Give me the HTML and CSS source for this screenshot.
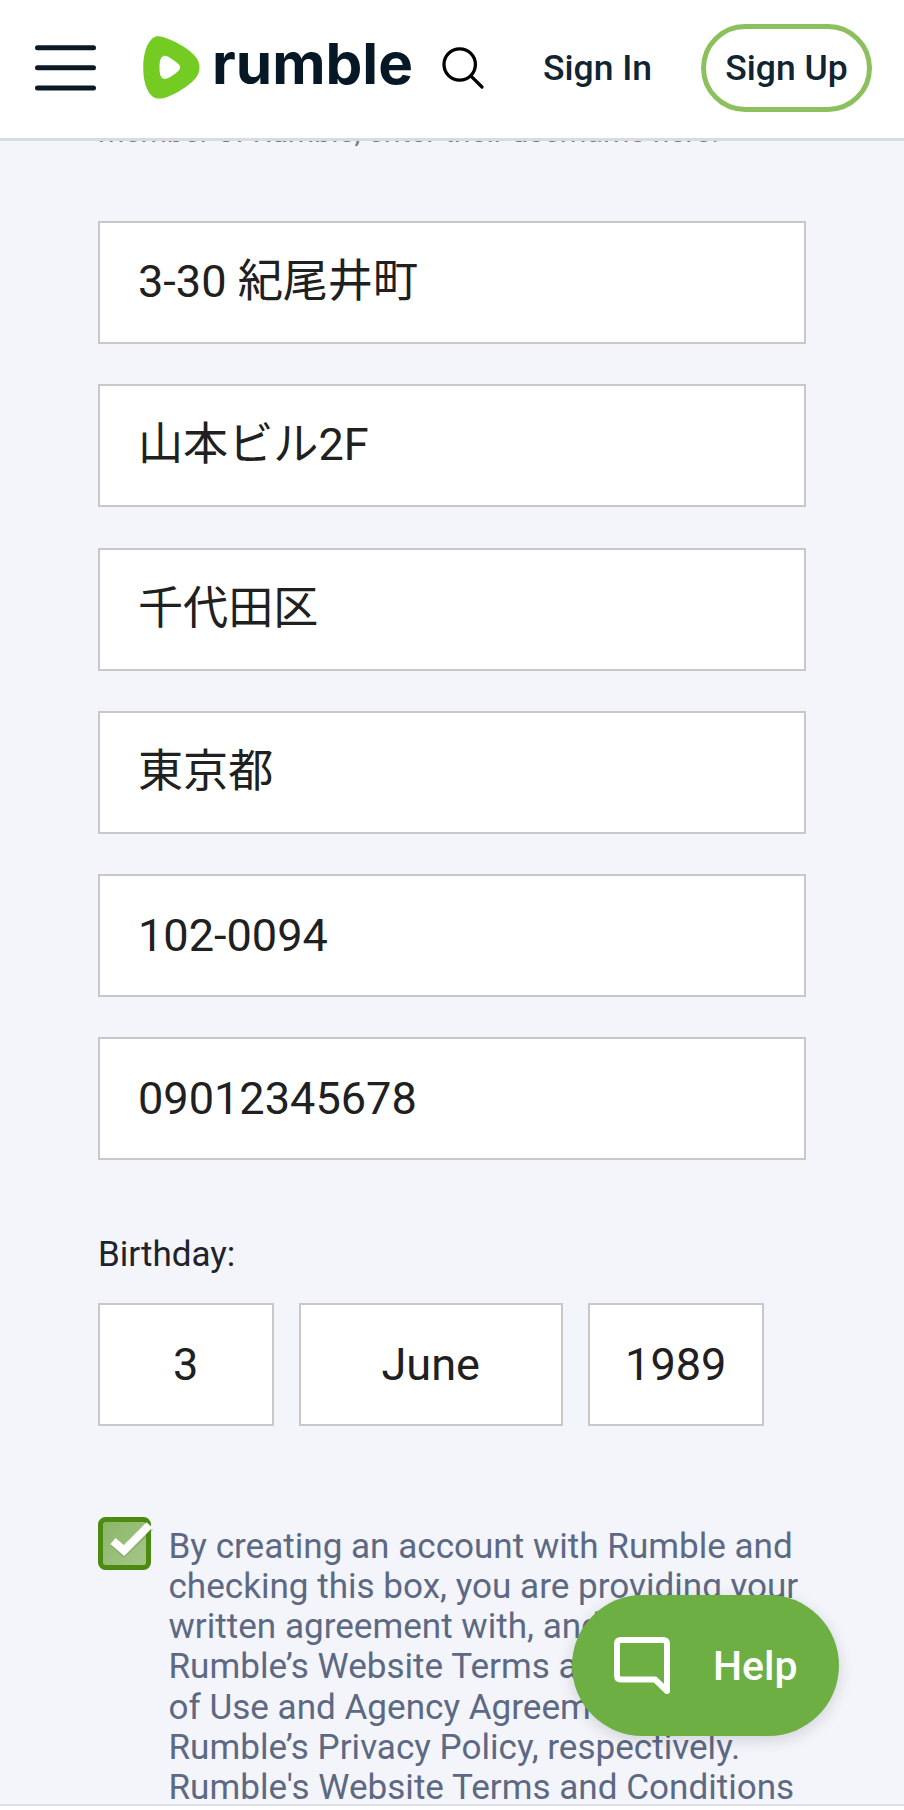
FILE: index.html
```html
<!DOCTYPE html>
<html lang="en">
<head>
    <meta charset="UTF-8">
    <meta name="viewport" content="width=device-width, initial-scale=1.0">
    <title>Rumble - Sign Up</title>
    <link rel="stylesheet" href="styles.css">
</head>
<body>
    <header class="header">
        <svg class="menu-icon" width="61" height="46" viewBox="0 0 61 46">
            <path d="M2.5 2.7H58.5M2.5 22.8H58.5M2.5 43H58.5" />
        </svg>
        <svg class="logo" width="272" height="64" viewBox="0 0 272 64">
            <path class="logo-mark" fill-rule="evenodd" d="M12 .8C15.500 -.4 20 .9 26 3.300C36 7.500 45 12.500 52 20C58 27 58 36 52 43C45 50.500 35 56.500 25 60.700C18.500 63.200 13 63.500 9 60C3 54.500 .2 44 .2 31C.2 18 4 4.500 12 .8ZM20 20.300C17.500 22 16.500 25 16.500 31.500C16.500 38 17.500 41 20 42.600C22 43.700 24.500 42.700 28 40.500C31 38.600 34 36.600 35.800 34.500C37.700 32.500 37.700 30.500 35.800 28.500C34 26.400 31 24.400 28 22.500C24.500 20.300 22 19.200 20 20.300Z" />
            <text class="logo-text" x="69" y="48" textLength="201" lengthAdjust="spacingAndGlyphs">rumble</text>
        </svg>
        <svg class="search-icon" width="44" height="44" viewBox="0 0 44 44">
            <circle cx="18.700" cy="18.500" r="15.700" />
            <path d="M29.800 29.800L41 41" />
        </svg>
        <a class="sign-in">Sign In</a>
        <a class="sign-up">Sign Up</a>
    </header>

    <main class="content">
        <p class="hint">member of Rumble, enter their username here.</p>
        <form class="form">
            <div class="fields">
                <input class="field field-ja" type="text" value="3-30 紀尾井町">
                <input class="field field-ja" type="text" value="山本ビル2F">
                <input class="field field-ja" type="text" value="千代田区">
                <input class="field field-ja" type="text" value="東京都">
                <input class="field" type="text" value="102-0094">
                <input class="field" type="text" value="09012345678">
            </div>

            <div class="birthday-label">Birthday:</div>
            <div class="birthday">
                <input class="field" type="text" value="3">
                <input class="field" type="text" value="June">
                <input class="field" type="text" value="1989">
            </div>

            <div class="terms">
                <svg class="checkbox" width="58" height="54" viewBox="0 0 58 54">
                    <defs>
                        <linearGradient id="check-bg" x1="0" y1="0" x2="1" y2="1">
                            <stop offset="0" stop-color="#8ab567" />
                            <stop offset="1" stop-color="#a6c88b" />
                        </linearGradient>
                    </defs>
                    <rect x="2.500" y="2.500" width="48" height="48" rx="5" fill="url(#check-bg)" stroke="#4c8a12" stroke-width="5" />
                    <path class="check-shadow" d="M15.500 26L26 35.500L52.500 10" />
                    <path class="check" d="M15 24L26 33.500L51.500 8" />
                </svg>
                <p class="terms-text">
                    By creating an account with Rumble and<br>
                    checking this box, you are providing your<br>
                    written agreement with, and consent to<br>
                    Rumble’s Website Terms and Conditions<br>
                    of Use and Agency Agreement, and<br>
                    Rumble’s Privacy Policy, respectively.<br>
                    Rumble's Website Terms and Conditions
                </p>
            </div>
        </form>
    </main>
    <footer class="bottom-bar"></footer>

    <button class="help">
        <svg class="help-icon" width="56" height="57" viewBox="0 0 56 57">
            <path d="M7 3H49Q53 3 53 7V54L41 42.500H7Q3 42.500 3 38.500V7Q3 3 7 3Z" />
        </svg>
        <span>Help</span>
    </button>
</body>
</html>
```

FILE: styles.css
```css
* {
    box-sizing: border-box;
}
body {
    position: relative;
    display: flex;
    flex-direction: column;
    height: 1810px;
    margin: 0;
    overflow: hidden;
    font-family: Roboto, "Noto Sans CJK JP", sans-serif;
    background-color: #f3f5fa;
}
.header {
    display: flex;
    align-items: center;
    flex: none;
    height: 141px;
    padding: 0 32px 3px 35px;
    background-color: #fff;
    border-bottom: 3px solid #d6dce1;
}
.menu-icon {
    margin-right: 47px;
    fill: none;
    stroke: #0b1a26;
    stroke-width: 5;
    stroke-linecap: round;
}
.logo {
    margin-right: 26px;
    overflow: visible;
}
.logo-mark {
    fill: #74cb21;
}
.logo-text {
    font-family: Inter, sans-serif;
    font-size: 57px;
    font-weight: 700;
    fill: #061726;
}
.search-icon {
    fill: none;
    stroke: #000;
    stroke-width: 3.3;
    stroke-linecap: round;
}
.sign-in,
.sign-up {
    font-size: 35.5px;
    font-weight: 500;
    line-height: 40px;
    color: #102432;
    white-space: nowrap;
}
.sign-in {
    margin-left: 58px;
}
.sign-up {
    display: flex;
    align-items: center;
    justify-content: center;
    width: 171px;
    height: 88px;
    margin-left: auto;
    border: 5px solid #8bc05c;
    border-radius: 44px;
}
.content {
    flex: 1;
    min-height: 0;
    padding: 0 98px;
    overflow: hidden;
}
.hint {
    margin: -29px 0 69px;
    font-size: 30.15px;
    line-height: 40px;
    color: #777b80;
    white-space: nowrap;
}
.fields {
    display: flex;
    flex-direction: column;
    gap: 40.3px;
}
.field {
    width: 100%;
    height: 123px;
    padding: 0 38px 1px;
    border: 2px solid #c8c8ca;
    border-radius: 0;
    font-family: inherit;
    font-size: 45.1px;
    color: #202020;
    background-color: #fff;
}
.field-ja {
    padding-bottom: 10px;
}
.birthday-label {
    margin: 75px 0 28px;
    font-size: 35px;
    line-height: 40px;
    color: #202329;
}
.birthday {
    display: grid;
    grid-template-columns: 175.5px 263.5px 175.5px;
    gap: 25.5px;
}
.birthday .field {
    padding: 0;
    text-align: center;
}
.terms {
    display: flex;
    gap: 12.5px;
    margin-top: 91px;
}
.checkbox {
    flex: none;
}
.check,
.check-shadow {
    fill: none;
    stroke: #fff;
    stroke-width: 8;
}
.check-shadow {
    stroke: #557a3a;
    stroke-opacity: 0.25;
}
.terms-text {
    margin: 8.5px 0 0;
    font-size: 35.1px;
    line-height: 40.15px;
    color: #5d6984;
    white-space: nowrap;
}
.bottom-bar {
    flex: none;
    height: 6px;
    background-color: #fff;
    border-top: 2px solid #dde0e8;
}
.help {
    position: absolute;
    right: 65px;
    bottom: 74px;
    display: flex;
    align-items: center;
    gap: 43px;
    width: 267px;
    height: 141px;
    padding: 0 42px;
    border: none;
    border-radius: 71px;
    font-family: inherit;
    font-size: 41px;
    font-weight: 500;
    color: #fff;
    background-color: #6daf43;
    box-shadow: 0 4px 16px rgba(0, 0, 0, 0.14);
}
.help-icon {
    flex: none;
    fill: none;
    stroke: #fff;
    stroke-width: 6;
    stroke-linejoin: round;
}
```
